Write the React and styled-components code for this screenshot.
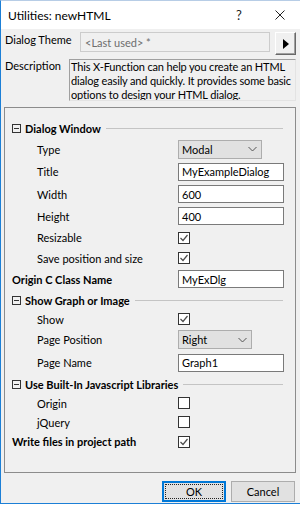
import React from 'react';
import styled, { createGlobalStyle } from 'styled-components';

const GlobalStyle = createGlobalStyle`
  html, body {
    margin: 0;
    padding: 0;
    background: #ffffff;
  }
  body {
    font-family: "Segoe UI", Lato, "Noto Sans", sans-serif;
    font-size: 11px;
    color: #000;
  }
`;

const Window = styled.div`
  box-sizing: border-box;
  width: 300px;
  height: 504px;
  display: flex;
  flex-direction: column;
  background: #f0f0f0;
  border-left: 1px solid #1c7fd6;
  border-top: 1px solid #b7cde6;
  border-bottom: 1px solid #1c7fd6;
`;

const TitleBar = styled.div`
  height: 28px;
  flex: none;
  display: flex;
  align-items: center;
  background: #ffffff;
  padding-left: 7px;
`;

const TitleText = styled.div`
  flex: 1;
  font-size: 12px;
`;

const TitleIcon = styled.div`
  width: ${(p) => p.w}px;
  margin-right: ${(p) => p.mr || 0}px;
  display: flex;
  align-items: center;
  justify-content: center;
  font-size: 13px;
  color: #222;
`;

const Body = styled.div`
  flex: 1;
  display: flex;
  flex-direction: column;
  padding: 3px 4px 1px 3px;
`;

const TopRow = styled.div`
  display: flex;
  align-items: flex-start;
  height: ${(p) => p.h}px;
  margin-bottom: ${(p) => p.mb || 0}px;
`;

const TopLabel = styled.div`
  width: ${(p) => p.w}px;
  flex: none;
  padding-left: 1px;
  line-height: 16px;
  white-space: nowrap;
  margin-top: ${(p) => p.mt || 0}px;
`;

const ThemeField = styled.div`
  box-sizing: border-box;
  width: 191px;
  height: 20px;
  display: flex;
  align-items: center;
  padding-left: 4px;
  background: #f0f0f0;
  border: 1px solid #cccccc;
  color: #6d6d6d;
`;

const ArrowButton = styled.div`
  box-sizing: border-box;
  margin-left: 5px;
  width: 21px;
  height: 23px;
  display: flex;
  align-items: center;
  justify-content: center;
  background: #f0f0f0;
  border-top: 1px solid #ffffff;
  border-left: 1px solid #ffffff;
  border-right: 1px solid #696969;
  border-bottom: 1px solid #696969;
  box-shadow: inset -1px -1px 0 #a0a0a0;
`;

const DescBox = styled.div`
  box-sizing: border-box;
  width: 228px;
  height: 42px;
  padding: 0 0 0 1px;
  line-height: 14px;
  letter-spacing: -0.15px;
  white-space: nowrap;
  overflow: hidden;
  background: #f0f0f0;
  border-top: 1px solid #a0a0a0;
  border-left: 1px solid #a0a0a0;
  border-right: 1px solid #e3e3e3;
  border-bottom: 1px solid #e3e3e3;
`;

const Panel = styled.div`
  box-sizing: border-box;
  height: 366px;
  flex: none;
  display: flex;
  flex-direction: column;
  padding-top: 10px;
  border: 1px solid #8c8c8c;
`;

const SectionHeader = styled.div`
  display: flex;
  align-items: center;
  height: 20px;
  padding: 0 12px 0 7px;
  font-weight: bold;
  white-space: nowrap;
`;

const CollapseBox = styled.span`
  box-sizing: border-box;
  width: 9px;
  height: 9px;
  margin-right: 4px;
  border: 1px solid #333;
  display: flex;
  align-items: center;
  justify-content: center;
  &::after {
    content: '';
    width: 5px;
    height: 1px;
    background: #333;
  }
`;

const HeaderLine = styled.span`
  flex: 1;
  height: 1px;
  margin-left: 5px;
  background: #c4c4c4;
`;

const PropRow = styled.div`
  display: grid;
  grid-template-columns: 173px 1fr;
  align-items: center;
  height: ${(p) => p.h}px;
  padding-right: 11px;
`;

const PropLabel = styled.div`
  padding-left: ${(p) => (p.top ? 7 : 32)}px;
  font-weight: ${(p) => (p.top ? 'bold' : 'normal')};
  white-space: nowrap;
`;

const TextField = styled.div`
  box-sizing: border-box;
  height: 18px;
  display: flex;
  align-items: center;
  padding-left: 3px;
  background: #ffffff;
  border: 1px solid #7a7a7a;
`;

const SelectBox = styled.div`
  box-sizing: border-box;
  width: ${(p) => p.w}px;
  height: 19px;
  display: flex;
  align-items: center;
  justify-content: space-between;
  padding: 0 4px 0 3px;
  background: #e1e1e1;
  border: 1px solid #adadad;
`;

const CheckBox = styled.div`
  box-sizing: border-box;
  width: 12px;
  height: 12px;
  background: #ffffff;
  border: 1px solid #333333;
  display: flex;
  align-items: center;
  justify-content: center;
`;

const Footer = styled.div`
  display: flex;
  justify-content: flex-end;
  gap: 5px;
  margin-top: 8px;
  padding-right: 1px;
`;

const Button = styled.div`
  box-sizing: border-box;
  width: 64px;
  height: 21px;
  display: flex;
  align-items: center;
  justify-content: center;
  background: #e1e1e1;
  border: 1px solid ${(p) => (p.primary ? '#0078d7' : '#adadad')};
  box-shadow: ${(p) => (p.primary ? 'inset 0 0 0 1px #0078d7' : 'none')};
  position: relative;
  &::after {
    content: '';
    display: ${(p) => (p.primary ? 'block' : 'none')};
    position: absolute;
    inset: 2px;
    border: 1px dotted #222;
  }
`;

function Chevron() {
  return (
    <svg width="9" height="6" viewBox="0 0 9 6">
      <path d="M0.5 1 L4.5 5 L8.5 1" fill="none" stroke="#555" strokeWidth="1" />
    </svg>
  );
}

function Check({ checked }) {
  return (
    <CheckBox>
      {checked && (
        <svg width="10" height="10" viewBox="0 0 10 10">
          <path d="M1.5 5 L4 7.5 L8.5 2" fill="none" stroke="#4d4d4d" strokeWidth="1.2" />
        </svg>
      )}
    </CheckBox>
  );
}

function Header({ children }) {
  return (
    <SectionHeader>
      <CollapseBox />
      {children}
      <HeaderLine />
    </SectionHeader>
  );
}

function Prop({ label, top, h = 22, children }) {
  return (
    <PropRow h={h}>
      <PropLabel top={top}>{label}</PropLabel>
      <div>{children}</div>
    </PropRow>
  );
}

export default function App() {
  return (
    <>
      <GlobalStyle />
      <Window>
        <TitleBar>
          <TitleText>Utilities: newHTML</TitleText>
          <TitleIcon w={16} mr={13}>?</TitleIcon>
          <TitleIcon w={40}>
            <svg width="10" height="10" viewBox="0 0 10 10">
              <path d="M0.5 0.5 L9.5 9.5 M9.5 0.5 L0.5 9.5" stroke="#222" strokeWidth="1" />
            </svg>
          </TitleIcon>
        </TitleBar>
        <Body>
          <TopRow h={23} mb={4}>
            <TopLabel w={75}>Dialog Theme</TopLabel>
            <ThemeField>&lt;Last used&gt; *</ThemeField>
            <ArrowButton>
              <svg width="6" height="10" viewBox="0 0 6 10">
                <path d="M0 0 L6 5 L0 10 Z" fill="#000" />
              </svg>
            </ArrowButton>
          </TopRow>
          <TopRow h={42} mb={6}>
            <TopLabel w={64} mt={-1}>Description</TopLabel>
            <DescBox>
              This X-Function can help you create an HTML<br />
              dialog easily and quickly. It provides some basic<br />
              options to design your HTML dialog.
            </DescBox>
          </TopRow>
          <Panel>
            <Header>Dialog Window</Header>
            <Prop label="Type">
              <SelectBox w={84}>Modal<Chevron /></SelectBox>
            </Prop>
            <Prop label="Title" h={23}>
              <TextField>MyExampleDialog</TextField>
            </Prop>
            <Prop label="Width">
              <TextField>600</TextField>
            </Prop>
            <Prop label="Height">
              <TextField>400</TextField>
            </Prop>
            <Prop label="Resizable" h={21}>
              <Check checked />
            </Prop>
            <Prop label="Save position and size" h={20}>
              <Check checked />
            </Prop>
            <Prop label="Origin C Class Name" top>
              <TextField>MyExDlg</TextField>
            </Prop>
            <Header>Show Graph or Image</Header>
            <Prop label="Show" h={18}>
              <Check checked />
            </Prop>
            <Prop label="Page Position" h={23}>
              <SelectBox w={74}>Right<Chevron /></SelectBox>
            </Prop>
            <Prop label="Page Name" h={23}>
              <TextField>Graph1</TextField>
            </Prop>
            <Header>Use Built-In Javascript Libraries</Header>
            <Prop label="Origin" h={18}>
              <Check />
            </Prop>
            <Prop label="jQuery" h={20}>
              <Check />
            </Prop>
            <Prop label="Write files in project path" top h={19}>
              <Check checked />
            </Prop>
          </Panel>
          <Footer>
            <Button primary>OK</Button>
            <Button>Cancel</Button>
          </Footer>
        </Body>
      </Window>
    </>
  );
}
